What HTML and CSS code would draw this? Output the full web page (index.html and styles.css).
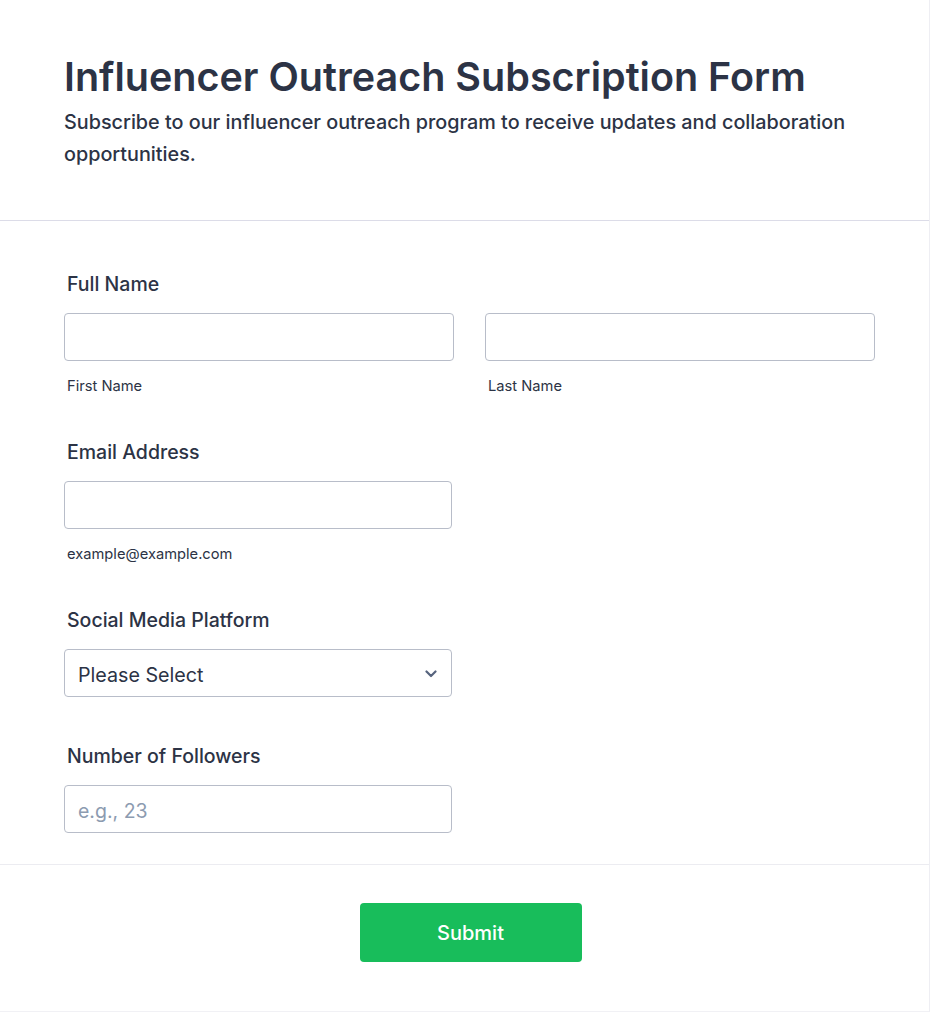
FILE: index.html
```html
<!DOCTYPE html>
<html lang="en">
<head>
<meta charset="utf-8">
<title>Influencer Outreach Subscription Form</title>
<link rel="stylesheet" href="styles.css">
</head>
<body>
<form class="card">
  <header class="header">
    <h1 class="title">Influencer Outreach Subscription Form</h1>
    <p class="subtitle">Subscribe to our influencer outreach program to receive updates and collaboration opportunities.</p>
  </header>
  <section class="fields">
    <div class="field field-sub">
      <label class="label">Full Name</label>
      <div class="name-row">
        <div class="name-col">
          <input class="input" type="text">
          <span class="sublabel">First Name</span>
        </div>
        <div class="name-col">
          <input class="input" type="text">
          <span class="sublabel">Last Name</span>
        </div>
      </div>
    </div>
    <div class="field field-sub">
      <label class="label">Email Address</label>
      <div class="half">
        <input class="input" type="email">
        <span class="sublabel">example@example.com</span>
      </div>
    </div>
    <div class="field field-plain">
      <label class="label">Social Media Platform</label>
      <div class="half select-wrap">
        <div class="select">
          <span>Please Select</span>
          <svg class="chevron" width="12" height="8" viewBox="0 0 12 8"><path d="M1.5 1.5 6 6l4.5-4.5" fill="none" stroke="#57647e" stroke-width="2.2" stroke-linecap="round" stroke-linejoin="round"/></svg>
        </div>
      </div>
    </div>
    <div class="field field-last">
      <label class="label">Number of Followers</label>
      <div class="half">
        <input class="input" type="text" placeholder="e.g., 23">
      </div>
    </div>
  </section>
  <footer class="footer">
    <button class="submit" type="button">Submit</button>
  </footer>
</form>
</body>
</html>
```

FILE: styles.css
```css
* { box-sizing: border-box; }
html, body { margin: 0; padding: 0; background: #ffffff; }
body { font-family: Inter, "Noto Sans", "Liberation Sans", sans-serif; color: #2c3345; }

.card {
  width: 930px;
  min-height: 1012px;
  background: #fff;
  border-right: 1px solid #eeeef3;
  border-bottom: 1px solid #f1f1f5;
}

.header {
  padding: 53px 64px 50px;
  border-bottom: 1px solid #dcdce8;
}
.title {
  margin: 0;
  font-size: 39.5px;
  line-height: 48px;
  font-weight: 600;
  color: #2c3345;
}
.subtitle {
  margin: 5px 0 0;
  font-size: 19.8px;
  line-height: 32px;
  font-weight: 500;
  color: #2c3345;
}

.fields {
  padding: 50px 54px 31px 64px;
  border-bottom: 1px solid #ececf1;
}
.field { display: flex; flex-direction: column; }
.field-sub { margin-bottom: 43px; }
.field-plain { margin-bottom: 46px; }

.label {
  display: block;
  padding-left: 3px;
  font-size: 19.5px;
  line-height: 26px;
  font-weight: 500;
  margin-bottom: 16px;
  color: #2c3345;
}
.name-row { display: flex; gap: 31px; }
.name-col { width: 390px; display: flex; flex-direction: column; }
.half { width: 388px; display: flex; flex-direction: column; }

.input {
  display: block;
  width: 100%;
  height: 48px;
  border: 1px solid #b8bdc9;
  border-radius: 4px;
  padding: 3px 13px 0;
  font-family: inherit;
  font-size: 19.5px;
  color: #2c3345;
  background: #fff;
  outline: none;
}
.input::placeholder { color: #8c9bb0; }

.sublabel {
  display: block;
  margin-top: 15px;
  padding-left: 3px;
  font-size: 14.7px;
  line-height: 20px;
  color: #2c3345;
}

.select {
  height: 48px;
  border: 1px solid #b8bdc9;
  border-radius: 4px;
  padding: 3px 13px 0 13px;
  display: flex;
  align-items: center;
  justify-content: space-between;
  font-size: 19.7px;
  color: #2c3345;
}
.chevron { margin-right: 1px; margin-bottom: 1px; }

.footer {
  padding: 38px 0 49px;
  display: flex;
  justify-content: center;
}
.submit {
  width: 222px;
  height: 59px;
  margin-left: 12px;
  padding-top: 2px;
  background: #18bd5b;
  border: none;
  border-radius: 4px;
  color: #fff;
  font-family: inherit;
  font-size: 20px;
  font-weight: 500;
  cursor: pointer;
}
```
